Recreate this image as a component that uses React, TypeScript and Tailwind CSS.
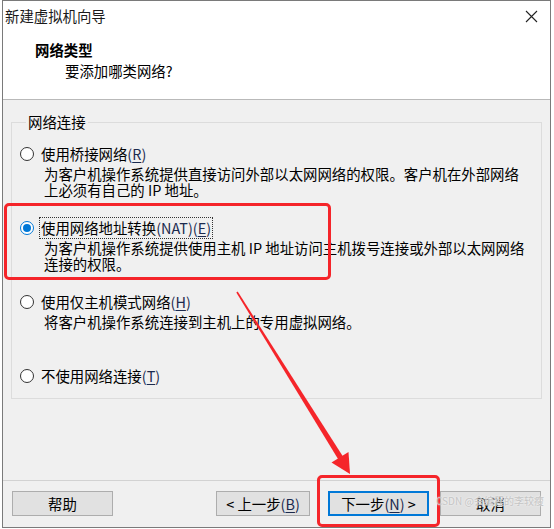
import type { ReactNode } from "react";

const Radio = ({ checked }: { checked?: boolean }) =>
  checked ? (
    <span className="flex h-[14px] w-[14px] shrink-0 items-center justify-center rounded-full border border-[#0078d7] bg-white">
      <span className="h-[8px] w-[8px] rounded-full bg-[#0078d7]" />
    </span>
  ) : (
    <span className="h-[14px] w-[14px] shrink-0 rounded-full border border-[#333333] bg-white" />
  );

const Key = ({ k }: { k: string }) => (
  <span className="text-[#1b2a4e]">
    (<u className="underline-offset-2">{k}</u>)
  </span>
);

const Option = ({
  label,
  desc,
  checked,
  focused,
  className,
}: {
  label: ReactNode;
  desc?: ReactNode;
  checked?: boolean;
  focused?: boolean;
  className?: string;
}) => (
  <div className={className}>
    <div className="flex h-[20px] items-center gap-[5px]">
      <Radio checked={checked} />
      <span
        className={
          focused
            ? "border border-dotted border-[#333] px-[1px] leading-[20px]"
            : "px-[2px] leading-[20px]"
        }
      >
        {label}
      </span>
    </div>
    {desc && <p className="mt-[2px] pl-[24px] leading-[16px]">{desc}</p>}
  </div>
);

const Button = ({ children, primary }: { children: ReactNode; primary?: boolean }) => (
  <button
    type="button"
    className={
      "flex h-[25px] w-[101px] items-center justify-center bg-[#e1e1e1] text-[14.4px] " +
      (primary ? "border-2 border-[#0078d7]" : "border border-[#adadad]")
    }
  >
    {children}
  </button>
);

export default function App() {
  return (
    <div className="relative h-[529px] w-[554px] overflow-hidden bg-white pl-[2px] font-['Noto_Sans_CJK_SC','Microsoft_YaHei',sans-serif] text-[14.4px] text-black">
      <div className="flex h-[528px] w-[549px] flex-col border border-[#7a7a7a] bg-[#f0f0f0]">
        {/* header */}
        <div className="h-[99px] border-b border-[#b9b9b9] bg-white">
          <div className="flex h-[30px] items-center justify-between pl-[2px] pr-[12px]">
            <span className="text-[#1a1a1a]">新建虚拟机向导</span>
            <svg width="13" height="13" viewBox="0 0 13 13">
              <path d="M1 1 L12 12 M12 1 L1 12" stroke="#222" strokeWidth="1.1" />
            </svg>
          </div>
          <div className="pt-[9px] leading-[20px]">
            <div className="pl-[32px] font-bold">网络类型</div>
            <div className="mt-[1px] pl-[62px]">要添加哪类网络?</div>
          </div>
        </div>

        {/* body */}
        <div className="flex-1 px-[8px]">
          <fieldset className="mt-[12px] h-[287px] border border-[#dcdcdc] pl-[8px]">
            <legend className="ml-[6px] px-[2px] leading-[20px]">网络连接</legend>
            <Option
              className="mt-[12px]"
              label={
                <>
                  使用桥接网络<Key k="R" />
                </>
              }
              desc={
                <>
                  为客户机操作系统提供直接访问外部以太网网络的权限。客户机在外部网络
                  <br />
                  上必须有自己的 IP 地址。
                </>
              }
            />
            <Option
              className="mt-[20px]"
              checked
              focused
              label={
                <>
                  使用网络地址转换<span className="text-[#1b2a4e]">(NAT)</span>
                  <Key k="E" />
                </>
              }
              desc={
                <>
                  为客户机操作系统提供使用主机 IP 地址访问主机拨号连接或外部以太网网络
                  <br />
                  连接的权限。
                </>
              }
            />
            <Option
              className="mt-[20px]"
              label={
                <>
                  使用仅主机模式网络<Key k="H" />
                </>
              }
              desc="将客户机操作系统连接到主机上的专用虚拟网络。"
            />
            <Option
              className="mt-[36px]"
              label={
                <>
                  不使用网络连接<Key k="T" />
                </>
              }
            />
          </fieldset>
        </div>

        {/* footer */}
        <div className="flex h-[47px] items-start border-t border-[#d2d2d2] px-[9px] pt-[10px]">
          <Button>帮助</Button>
          <div className="ml-auto flex gap-[11px]">
            <div className="flex gap-[18px]">
              <button
                type="button"
                className="flex h-[25px] w-[94px] items-center justify-center border border-[#adadad] bg-[#e1e1e1] text-[14.4px]"
              >
                &lt; 上一步<Key k="B" />
              </button>
              <Button primary>
                下一步<Key k="N" />&nbsp;&gt;
              </Button>
            </div>
            <Button>取消</Button>
          </div>
        </div>
      </div>

      {/* annotations */}
      <div className="pointer-events-none absolute left-[4px] top-[203px] h-[77px] w-[327px] rounded-[5px] border-[3px] border-[#f5252a]" />
      <div className="pointer-events-none absolute left-[317px] top-[475px] h-[52px] w-[123px] rounded-[5px] border-[3px] border-[#f5252a]" />
      <svg className="pointer-events-none absolute left-0 top-0" width="554" height="529" viewBox="0 0 554 529">
        <polygon points="237.7,291.6 236.3,292.4 338.2,459.2 342.8,456.3" fill="#f5252a" />
        <polygon points="350,474 331.5,462.5 348.5,452" fill="#f5252a" />
      </svg>
      <div className="pointer-events-none absolute left-[436px] top-[494px] whitespace-nowrap text-[10px] leading-[13px] text-[#c4c4c4] [text-shadow:0_0_2px_#fff]">
        CSDN @会编程的李较瘦
      </div>
    </div>
  );
}
